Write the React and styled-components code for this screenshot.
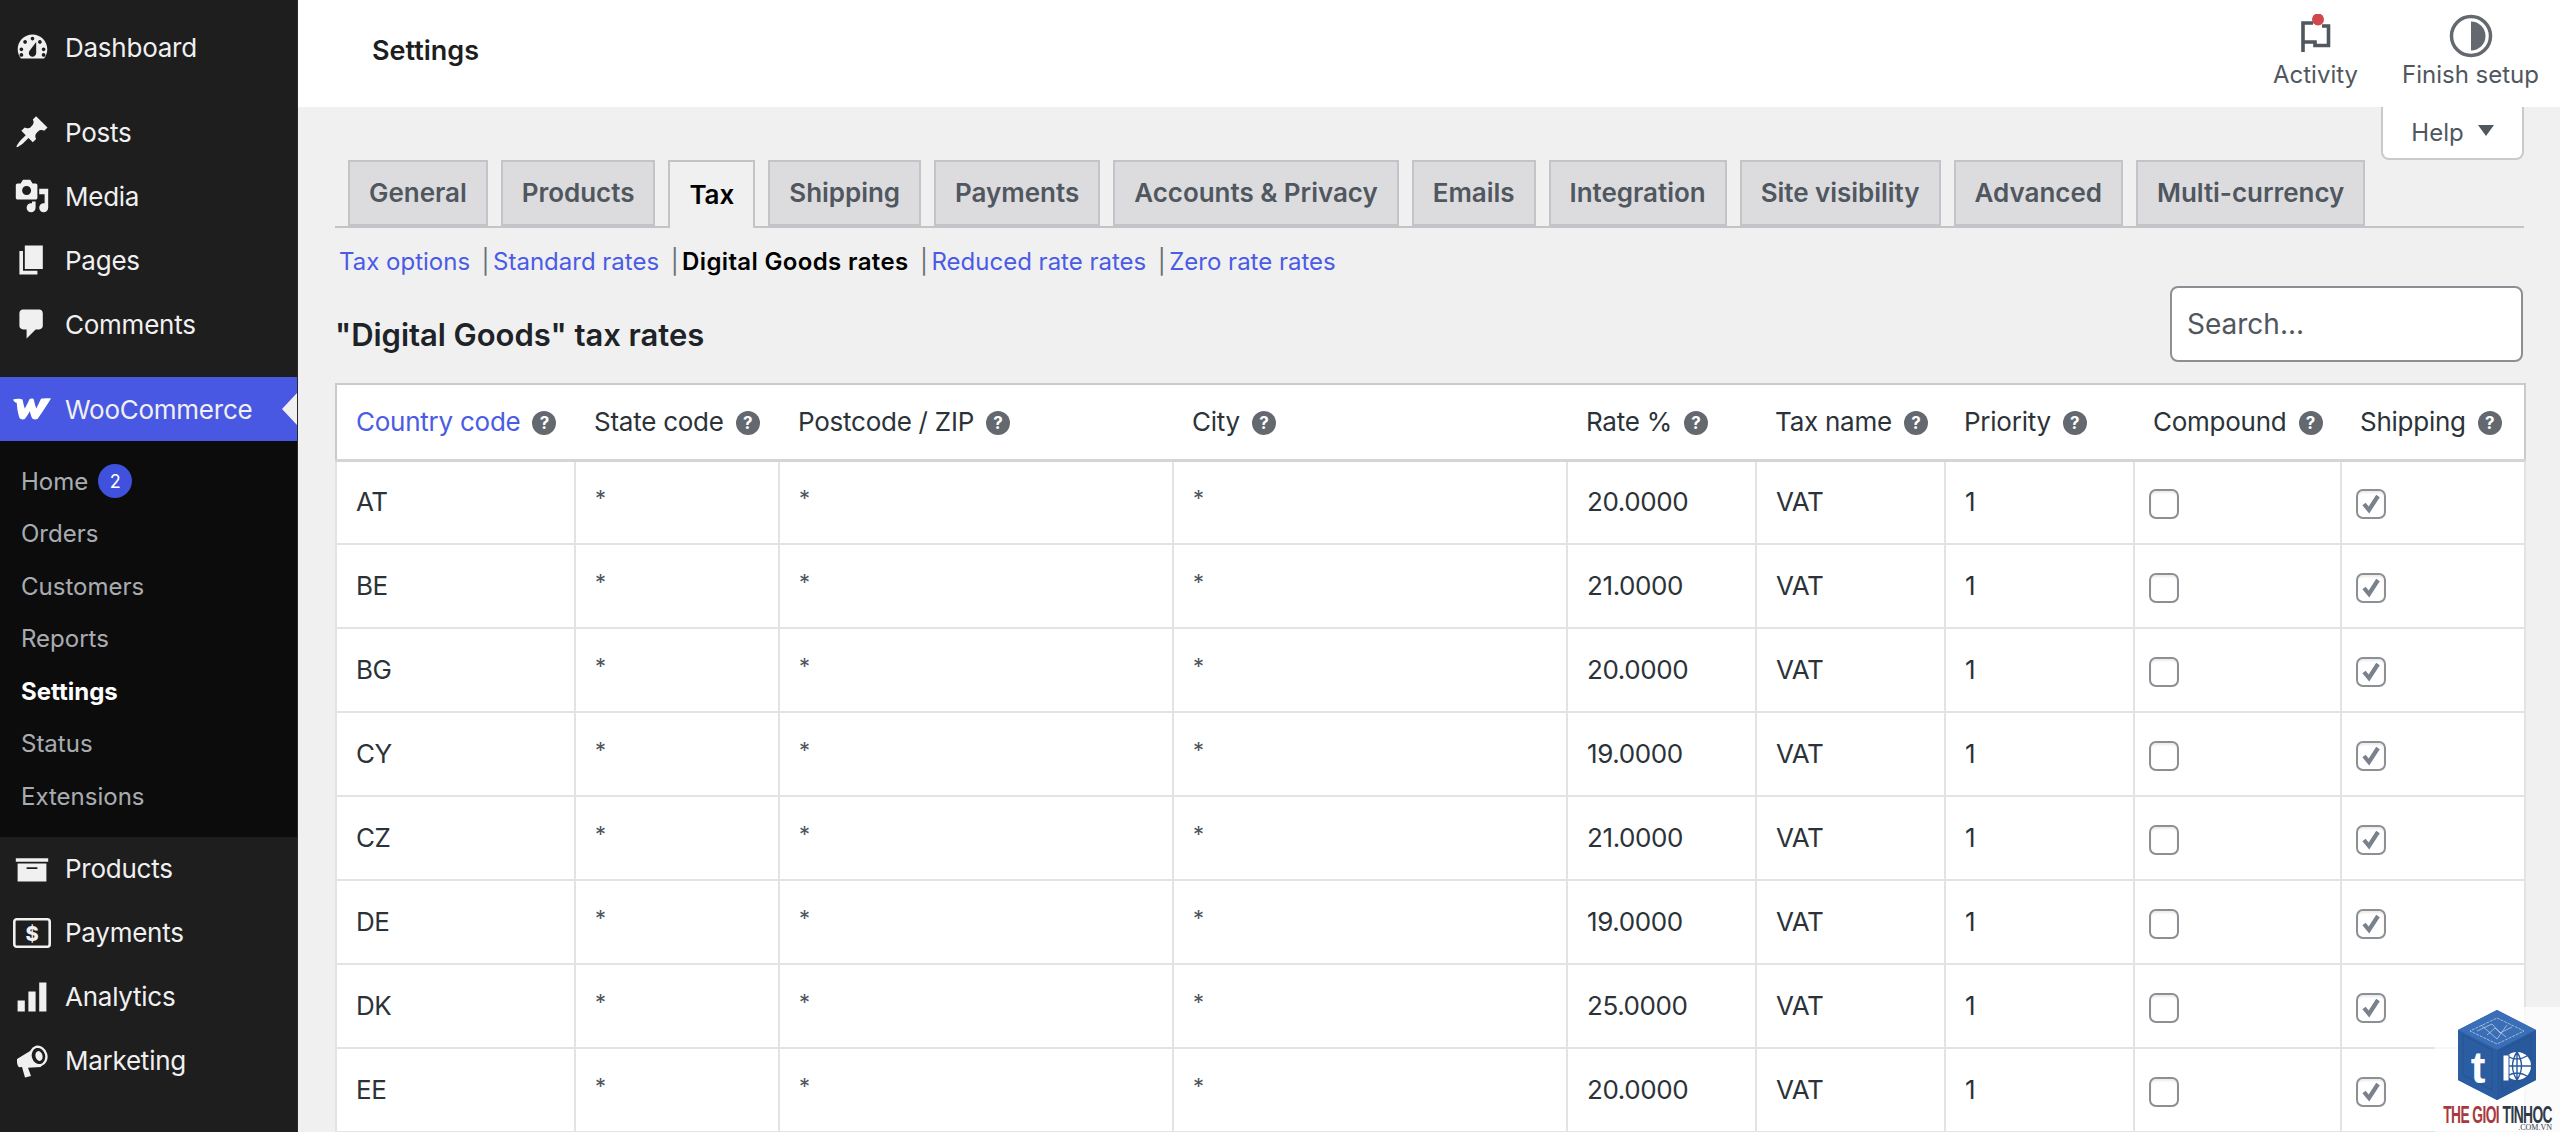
import React from "react";
import styled, { createGlobalStyle } from "styled-components";

const Global = createGlobalStyle`
  html, body { margin: 0; padding: 0; height: 1132px; overflow: hidden; background: #f0f0f0; }
  body { font-family: Inter, "Liberation Sans", sans-serif; -webkit-font-smoothing: antialiased; }
  * { box-sizing: border-box; }
`;

const Page = styled.div`
  position: relative;
  display: flex;
  width: 2560px;
  height: 1132px;
  overflow: hidden;
`;

/* ---------- sidebar ---------- */
const Sidebar = styled.nav`
  flex: 0 0 298px;
  height: 100%;
  background: #1e1e1e;
  padding-top: 15px;
  border-right: 1px solid #2a2a2a;
`;
const MenuItem = styled.div`
  position: relative;
  display: flex;
  align-items: center;
  height: 64px;
  margin-top: ${(p) => p.$gap || 0}px;
  background: ${(p) => (p.$active ? "#4858e2" : "transparent")};
  color: #f0f0f1;
  font-size: 26px;
  font-weight: 400;
  letter-spacing: -0.25px;
`;
const MenuIcon = styled.span`
  flex: 0 0 65px;
  display: flex;
  justify-content: center;
  padding-right: 1px;
  color: #f0f0f1;
  svg { display: block; }
`;
const ActiveArrow = styled.span`
  position: absolute;
  right: 0;
  top: 16px;
  width: 0;
  height: 0;
  border-top: 16px solid transparent;
  border-bottom: 16px solid transparent;
  border-right: 15px solid #f0f0f0;
`;
const SubMenu = styled.div`
  background: #0c0c0c;
  padding: 14px 0;
`;
const SubItem = styled.div`
  display: flex;
  align-items: center;
  height: 52.5px;
  padding-left: 21px;
  font-size: 24px;
  color: ${(p) => (p.$current ? "#fff" : "rgba(240,246,252,.7)")};
  font-weight: ${(p) => (p.$current ? 700 : 400)};
`;
const Badge = styled.span`
  display: inline-flex;
  align-items: center;
  justify-content: center;
  width: 34px;
  height: 34px;
  margin-left: 10px;
  border-radius: 50%;
  background: #3f51dd;
  color: #fff;
  font-size: 18px;
`;

/* ---------- main ---------- */
const Main = styled.main`
  flex: 1;
  min-width: 0;
  display: flex;
  flex-direction: column;
  overflow: hidden;
`;
const TopBar = styled.header`
  flex: 0 0 107px;
  display: flex;
  align-items: flex-start;
  justify-content: space-between;
  background: #fff;
  padding-left: 74px;
`;
const PageTitle = styled.h1`
  margin: 33px 0 0;
  font-size: 27px;
  line-height: 36px;
  font-weight: 600;
  color: #1e1e1e;
`;
const Actions = styled.div`
  display: flex;
  padding: 14px 12px 0 0;
`;
const Action = styled.div`
  display: flex;
  flex-direction: column;
  align-items: center;
  width: ${(p) => p.$w}px;
  color: #50575e;
  font-size: 24px;
  line-height: 32px;
  svg { display: block; margin-bottom: 1px; }
`;
const Content = styled.div`
  flex: 1;
  padding: 0 36px 0 37px;
  background: #f0f0f0;
`;
const HelpRow = styled.div`
  display: flex;
  justify-content: flex-end;
  height: 53px;
`;
const HelpButton = styled.div`
  display: flex;
  align-items: center;
  justify-content: center;
  gap: 14px;
  width: 143px;
  height: 53px;
  padding-bottom: 1px;
  background: #fff;
  border: 2px solid #c9cacc;
  border-top: 0;
  border-radius: 0 0 8px 8px;
  color: #50575e;
  font-size: 24px;
`;
const Caret = styled.span`
  width: 0;
  height: 0;
  margin-top: -3px;
  border-left: 8px solid transparent;
  border-right: 8px solid transparent;
  border-top: 11px solid #50575e;
`;
const Tabs = styled.div`
  display: flex;
  gap: 13px;
  height: 68px;
  padding-left: 13px;
  border-bottom: 2px solid #c3c4c7;
`;
const Tab = styled.div`
  display: flex;
  align-items: center;
  height: ${(p) => (p.$active ? 68 : 66)}px;
  padding: 0 19px 1px;
  border: 2px solid #c3c4c7;
  border-bottom: ${(p) => (p.$active ? 0 : "2px solid #c3c4c7")};
  background: ${(p) => (p.$active ? "#f0f0f0" : "#dcdcde")};
  color: ${(p) => (p.$active ? "#000" : "#50575e")};
  font-size: 26px;
  font-weight: 600;
  letter-spacing: -0.03px;
  white-space: nowrap;
`;
const SubLinks = styled.div`
  display: flex;
  align-items: center;
  height: 34px;
  margin: 16px 0 0 4px;
  font-size: 24px;
  white-space: nowrap;
  color: #6a7078;
`;
const SubLink = styled.span`
  color: ${(p) => (p.$current ? "#000" : "#4a5be6")};
  font-weight: ${(p) => (p.$current ? 600 : 400)};
  letter-spacing: ${(p) => (p.$current ? "0.35px" : "0")};
`;
const Sep = styled.span`
  margin: 0 3.5px 0 11.5px;
`;
const HeadingRow = styled.div`
  display: flex;
  justify-content: space-between;
  align-items: flex-end;
  height: 76px;
  margin: 8px 1px 0 0;
`;
const Heading = styled.h2`
  margin: 0 0 10px;
  font-size: 31px;
  line-height: 34px;
  font-weight: 600;
  letter-spacing: -0.05px;
  color: #1d2327;
`;
const SearchBox = styled.div`
  display: flex;
  align-items: center;
  width: 353px;
  height: 76px;
  padding-left: 15px;
  background: #fff;
  border: 2px solid #8c8f94;
  border-radius: 8px;
  color: #50575e;
  font-size: 28px;
`;
const Table = styled.table`
  width: 2189px;
  margin-top: 21px;
  table-layout: fixed;
  border-collapse: collapse;
  background: #fff;
  border: 2px solid #c9cacc;
  color: #2c3338;
  font-size: 26px;
`;
const Th = styled.th`
  height: 76px;
  padding: 0 0 0 19px;
  text-align: left;
  font-weight: 400;
  letter-spacing: -0.25px;
  white-space: nowrap;
  border-bottom: 3px solid #d4d5d7;
  color: ${(p) => (p.$link ? "#4a5be6" : "#2c3338")};
`;
const Td = styled.td`
  height: 84px;
  padding: 0 0 2px ${(p) => (p.$box ? 14 : 19)}px;
  border: 2px solid #e2e3e4;
  letter-spacing: -0.4px;
`;
const Star = styled.span`
  position: relative;
  top: -5px;
  color: #50575e;
  font-size: 22px;
`;
const Help = styled.span`
  display: inline-flex;
  align-items: center;
  justify-content: center;
  width: 24px;
  height: 24px;
  margin-left: 12px;
  border-radius: 50%;
  background: #646970;
  color: #fff;
  font-size: 17px;
  font-weight: 700;
  letter-spacing: 0;
  vertical-align: 2px;
`;
const Check = styled.span`
  display: flex;
  align-items: center;
  justify-content: center;
  width: 30px;
  height: 30px;
  margin-top: 6px;
  background: #fff;
  border: 2px solid #8c8f94;
  border-radius: 7px;
  box-shadow: inset 0 2px 2px rgba(0, 0, 0, 0.08);
`;
const Watermark = styled.div`
  position: absolute;
  right: 0;
  bottom: 0;
  width: 125px;
  height: 125px;
  background: rgba(255, 255, 255, 0.72);
  display: flex;
  flex-direction: column;
  align-items: center;
  padding-top: 3px;
  svg { display: block; margin-left: -2px; }
`;
const BrandLine = styled.div`
  margin: 6px 0 0 0;
  font-family: "Liberation Sans", sans-serif;
  font-weight: 700;
  font-size: 23px;
  line-height: 18px;
  letter-spacing: -1px;
  white-space: nowrap;
  transform: scaleX(0.6);
  color: #a8393e;
`;
const BrandDark = styled.span`
  color: #2f3a47;
  margin-left: 6px;
`;
const BrandSub = styled.div`
  align-self: flex-end;
  margin-right: 8px;
  font-family: "Liberation Serif", serif;
  font-size: 8px;
  line-height: 8px;
  color: #2f3a47;
`;

/* ---------- drawings ---------- */
const Dash = ({ d, s = 36 }) => (
  <svg width={s} height={s} viewBox="0 0 20 20" fill="#f0f0f1">
    <path fillRule="evenodd" d={d} />
  </svg>
);
const dashboard =
  "M3.76 16h12.48c1.1-1.37 1.76-3.11 1.76-5 0-4.42-3.58-8-8-8s-8 3.58-8 8c0 1.89.66 3.63 1.76 5zM10 4.200c.55 0 1 .45 1 1s-.45 1-1 1-1-.45-1-1 .45-1 1-1zM6 6c.55 0 1 .45 1 1s-.45 1-1 1-1-.45-1-1 .45-1 1-1zm8 0c.55 0 1 .45 1 1s-.45 1-1 1-1-.45-1-1 .45-1 1-1zm-5.37 5.55L12 7v6c0 1.1-.9 2-2 2s-2-.9-2-2c0-.57.24-1.08.63-1.45zM4 10c.55 0 1 .45 1 1s-.45 1-1 1-1-.45-1-1 .45-1 1-1zm12 0c.55 0 1 .45 1 1s-.45 1-1 1-1-.45-1-1 .45-1 1-1zm-12 3c.55 0 1 .45 1 1s-.45 1-1 1-1-.45-1-1 .45-1 1-1zm12 0c.55 0 1 .45 1 1s-.45 1-1 1-1-.45-1-1 .45-1 1-1z";
const pin =
  "M10.44 3.02l1.82-1.82 6.36 6.35-1.83 1.82c-1.05-.68-2.48-.57-3.41.36l-.75.75c-.92.93-1.04 2.35-.35 3.41l-1.83 1.82-2.41-2.41-2.8 2.79c-.42.42-3.38 2.71-3.8 2.29s1.86-3.39 2.28-3.81l2.79-2.79L4.1 9.36l1.83-1.82c1.05.69 2.48.57 3.4-.36l.75-.75c.93-.92 1.05-2.35.36-3.41z";
const media =
  "M13 11V4c0-.55-.45-1-1-1h-1.67L9 1H5L3.67 3H2c-.55 0-1 .45-1 1v7c0 .55.45 1 1 1h10c.55 0 1-.45 1-1zM7 4.5c1.38 0 2.5 1.12 2.5 2.5S8.38 9.5 7 9.5 4.5 8.38 4.5 7 5.62 4.5 7 4.5zM14 6h5v10.5c0 1.38-1.12 2.5-2.5 2.5S14 17.88 14 16.5s1.12-2.5 2.5-2.5c.17 0 .34.02.5.05V9h-3V6zm-4 8.05V13h2v3.5c0 1.38-1.12 2.5-2.5 2.5S7 17.88 7 16.5 8.12 14 9.5 14c.17 0 .34.02.5.05z";
const page = "M6 15V2h10v13H6zm-1 1h8v2H3V5h2v11z";
const comment =
  "M5 2h9c1.1 0 2 .9 2 2v7c0 1.1-.9 2-2 2h-2l-5 5v-5H5c-1.1 0-2-.9-2-2V4c0-1.1.9-2 2-2z";
const archive = "M19 4v2H1V4h18zM2 7h16v10H2V7zm11 3V9H7v1h6z";
const bars = "M18 18V2h-4v16h4zm-6 0V7H8v11h4zm-6 0v-6H2v6h4z";

const WooIcon = () => (
  <svg width="38" height="22" viewBox="0 0 38 22" fill="#fff">
    <path d="M0 1.500C3 .5 8 .5 9.500 1.500c.8 3 1.300 6.500 2.300 9 1.700-3 3.200-6 4.800-9.500 1.800-1 4-.6 4.300.8.6 3 1.300 6 2.400 8.700 1.600-3 3-6.500 4.700-9.700 2.500-.6 7-.8 10-.3-4 6.500-8.500 13.500-13.500 20.500-2.500.8-4.800.3-5.700-1.300-.8-2-1.500-4.200-2-6.400-1.500 2.700-3 5.300-5 7.700-2 .8-4.700.4-5.500-1.500C4.500 14 4 8.500 3.700 4.800 2 4.500.8 3.500 0 1.500z" />
  </svg>
);
const PayIcon = () => (
  <svg width="38" height="30" viewBox="0 0 38 30">
    <rect x="1.300" y="1.300" width="35.400" height="27.400" rx="2.500" fill="none" stroke="#f0f0f1" strokeWidth="2.600" />
    <text x="19" y="23" textAnchor="middle" fontFamily="Inter, sans-serif" fontSize="20" fontWeight="800" fill="#f0f0f1">
      $
    </text>
  </svg>
);
const MegaIcon = () => (
  <svg width="32" height="34" viewBox="0 0 32 34" fill="#f0f0f1">
    <path d="M1 15L19 4l6 19-13 .8 3 8.200-6 1.500-3-10.500-3 .2c-1.800-1.500-2.200-5-2-7.700z" />
    <ellipse cx="22.500" cy="12" rx="9" ry="10.500" transform="rotate(-15 22.500 12)" />
    <ellipse cx="22.500" cy="12" rx="6.700" ry="8.200" fill="#1e1e1e" transform="rotate(-15 22.500 12)" />
    <ellipse cx="23" cy="12" rx="3.500" ry="5" transform="rotate(-15 23 12)" />
  </svg>
);
const FlagIcon = () => (
  <svg width="44" height="44" viewBox="0 0 44 44">
    <path d="M9 38V9h10M9 28h12v3.500h13.500V12H28" fill="none" stroke="#50575e" strokeWidth="3.600" />
    <circle cx="24" cy="5.500" r="6" fill="#d0484b" />
  </svg>
);
const HalfCircle = () => (
  <svg width="44" height="44" viewBox="0 0 44 44">
    <circle cx="22" cy="22" r="19.500" fill="#fff" stroke="#646970" strokeWidth="3.500" />
    <path d="M22 7.500a14.500 14.500 0 0 1 0 29z" fill="#646970" />
  </svg>
);
const Tick = () => (
  <svg width="24" height="22" viewBox="0 0 24 22">
    <path d="M5 11l5 6 9-14" fill="none" stroke="#79818c" strokeWidth="4.200" />
  </svg>
);
const Cube = () => (
  <svg width="80" height="90" viewBox="0 0 80 90">
    <path d="M40 0l39 20v50L40 90 1 70V20z" fill="#2e64ac" />
    <path d="M40 0l39 20-39 20L1 20z" fill="#3a6eb6" />
    <path d="M1 20l39 20v50L1 70z" fill="#2b5da3" />
    <path d="M40 40l39-20v50L40 90z" fill="#28599c" />
    <path d="M40 8l27 13-27 13-27-13z" fill="none" stroke="#b9cde6" strokeWidth=".8" strokeDasharray="3 1" />
    <path d="M20 21l15-7 8 9 12-6M30 25l8-7 11 9M24 15l16 14 10-14" fill="none" stroke="#c6d6ea" strokeWidth=".7" />
    <path d="M6 25l29 15v40L6 65zM74 25L45 40v40l29-15z" fill="none" stroke="#2a548f" strokeWidth="1.200" />
    <text x="21" y="73" textAnchor="middle" fontFamily="'Liberation Sans', sans-serif" fontSize="44" fontWeight="700" fill="#fff">
      t
    </text>
    <circle cx="60" cy="56" r="14" fill="#fff" />
    <path d="M60 42v28M46 56h28M50 46q10 6 20 0M50 66q10-6 20 0M60 42q-9 14 0 28M60 42q9 14 0 28" fill="none" stroke="#28599c" strokeWidth="1.400" />
    <rect x="46" y="45" width="6" height="26" fill="#fff" stroke="#28599c" strokeWidth="1" />
  </svg>
);

const HelpIcon = () => <Help>?</Help>;

/* ---------- data ---------- */
const tabs = ["General", "Products", "Tax", "Shipping", "Payments", "Accounts & Privacy", "Emails", "Integration", "Site visibility", "Advanced", "Multi-currency"];
const links = ["Tax options", "Standard rates", "Digital Goods rates", "Reduced rate rates", "Zero rate rates"];
const widths = [239, 204, 394, 394, 189, 189, 189, 207, 184];
const heads = ["Country code", "State code", "Postcode / ZIP", "City", "Rate %", "Tax name", "Priority", "Compound", "Shipping"];
const rows = [
  ["AT", "20.0000"],
  ["BE", "21.0000"],
  ["BG", "20.0000"],
  ["CY", "19.0000"],
  ["CZ", "21.0000"],
  ["DE", "19.0000"],
  ["DK", "25.0000"],
  ["EE", "20.0000"],
];
const subs = ["Home", "Orders", "Customers", "Reports", "Settings", "Status", "Extensions"];

export default function App() {
  return (
    <Page>
      <Global />
      <Sidebar>
        <MenuItem><MenuIcon><Dash d={dashboard} s={37} /></MenuIcon>Dashboard</MenuItem>
        <MenuItem $gap={21}><MenuIcon><Dash d={pin} /></MenuIcon>Posts</MenuItem>
        <MenuItem><MenuIcon><Dash d={media} /></MenuIcon>Media</MenuItem>
        <MenuItem><MenuIcon><Dash d={page} /></MenuIcon>Pages</MenuItem>
        <MenuItem><MenuIcon><Dash d={comment} /></MenuIcon>Comments</MenuItem>
        <MenuItem $gap={21} $active><MenuIcon><WooIcon /></MenuIcon>WooCommerce<ActiveArrow /></MenuItem>
        <SubMenu>
          {subs.map((s) => (
            <SubItem key={s} $current={s === "Settings"}>
              {s}
              {s === "Home" && <Badge>2</Badge>}
            </SubItem>
          ))}
        </SubMenu>
        <MenuItem><MenuIcon><Dash d={archive} /></MenuIcon>Products</MenuItem>
        <MenuItem><MenuIcon><PayIcon /></MenuIcon>Payments</MenuItem>
        <MenuItem><MenuIcon><Dash d={bars} /></MenuIcon>Analytics</MenuItem>
        <MenuItem><MenuIcon><MegaIcon /></MenuIcon>Marketing</MenuItem>
      </Sidebar>
      <Main>
        <TopBar>
          <PageTitle>Settings</PageTitle>
          <Actions>
            <Action $w={155}><FlagIcon />Activity</Action>
            <Action $w={155}><HalfCircle />Finish setup</Action>
          </Actions>
        </TopBar>
        <Content>
          <HelpRow>
            <HelpButton>Help<Caret /></HelpButton>
          </HelpRow>
          <Tabs>
            {tabs.map((t) => (
              <Tab key={t} $active={t === "Tax"}>{t}</Tab>
            ))}
          </Tabs>
          <SubLinks>
            {links.map((l, i) => (
              <React.Fragment key={l}>
                {i > 0 && <Sep>|</Sep>}
                <SubLink $current={i === 2}>{l}</SubLink>
              </React.Fragment>
            ))}
          </SubLinks>
          <HeadingRow>
            <Heading>"Digital Goods" tax rates</Heading>
            <SearchBox>Search...</SearchBox>
          </HeadingRow>
          <Table>
            <colgroup>
              {widths.map((w, i) => <col key={i} width={w} />)}
            </colgroup>
            <thead>
              <tr>
                {heads.map((h, i) => (
                  <Th key={h} $link={i === 0}>{h}<HelpIcon /></Th>
                ))}
              </tr>
            </thead>
            <tbody>
              {rows.map(([code, rate]) => (
                <tr key={code}>
                  <Td>{code}</Td>
                  <Td><Star>*</Star></Td>
                  <Td><Star>*</Star></Td>
                  <Td><Star>*</Star></Td>
                  <Td>{rate}</Td>
                  <Td>VAT</Td>
                  <Td>1</Td>
                  <Td $box><Check /></Td>
                  <Td $box><Check><Tick /></Check></Td>
                </tr>
              ))}
            </tbody>
          </Table>
        </Content>
      </Main>
      <Watermark>
        <Cube />
        <BrandLine>THE GIOI<BrandDark>TINHOC</BrandDark></BrandLine>
        <BrandSub>.COM.VN</BrandSub>
      </Watermark>
    </Page>
  );
}
